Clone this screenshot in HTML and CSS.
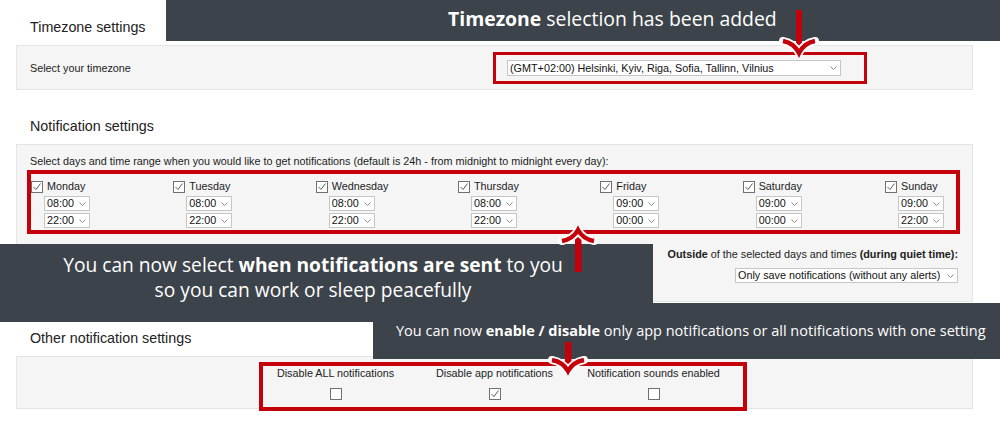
FILE: index.html
```html
<!DOCTYPE html>
<html lang="en">
<head>
<meta charset="utf-8">
<title>Settings</title>
<link rel="stylesheet" href="styles.css">
</head>
<body>
<div class="page">
  <section class="section">
    <h2 class="heading">Timezone settings</h2>
    <div class="panel panel-tz">
      <div class="tz-label">Select your timezone</div>
      <div class="hl hl-tz">
        <div class="select select-tz"><span>(GMT+02:00) Helsinki, Kyiv, Riga, Sofia, Tallinn, Vilnius</span><svg class="chev" viewBox="0 0 7 4"><polyline points="0.5,0.5 3.5,3.5 6.5,0.5"/></svg></div>
      </div>
    </div>
  </section>

  <section class="section">
    <h2 class="heading">Notification settings</h2>
    <div class="panel panel-notif">
      <p class="intro">Select days and time range when you would like to get notifications (default is 24h - from midnight to midnight every day):</p>
      <div class="hl hl-days">
        <div class="day">
          <div class="day-head"><span class="cb"><svg viewBox="0 0 10 10"><polyline points="1.5,5 4,7.5 8.5,1.5"/></svg></span><span>Monday</span></div>
          <div class="select select-time"><span>08:00</span><svg class="chev" viewBox="0 0 7 4"><polyline points="0.5,0.5 3.5,3.5 6.5,0.5"/></svg></div>
          <div class="select select-time"><span>22:00</span><svg class="chev" viewBox="0 0 7 4"><polyline points="0.5,0.5 3.5,3.5 6.5,0.5"/></svg></div>
        </div>
        <div class="day">
          <div class="day-head"><span class="cb"><svg viewBox="0 0 10 10"><polyline points="1.5,5 4,7.5 8.5,1.5"/></svg></span><span>Tuesday</span></div>
          <div class="select select-time"><span>08:00</span><svg class="chev" viewBox="0 0 7 4"><polyline points="0.5,0.5 3.5,3.5 6.5,0.5"/></svg></div>
          <div class="select select-time"><span>22:00</span><svg class="chev" viewBox="0 0 7 4"><polyline points="0.5,0.5 3.5,3.5 6.5,0.5"/></svg></div>
        </div>
        <div class="day">
          <div class="day-head"><span class="cb"><svg viewBox="0 0 10 10"><polyline points="1.5,5 4,7.5 8.5,1.5"/></svg></span><span>Wednesday</span></div>
          <div class="select select-time"><span>08:00</span><svg class="chev" viewBox="0 0 7 4"><polyline points="0.5,0.5 3.5,3.5 6.5,0.5"/></svg></div>
          <div class="select select-time"><span>22:00</span><svg class="chev" viewBox="0 0 7 4"><polyline points="0.5,0.5 3.5,3.5 6.5,0.5"/></svg></div>
        </div>
        <div class="day">
          <div class="day-head"><span class="cb"><svg viewBox="0 0 10 10"><polyline points="1.5,5 4,7.5 8.5,1.5"/></svg></span><span>Thursday</span></div>
          <div class="select select-time"><span>08:00</span><svg class="chev" viewBox="0 0 7 4"><polyline points="0.5,0.5 3.5,3.5 6.5,0.5"/></svg></div>
          <div class="select select-time"><span>22:00</span><svg class="chev" viewBox="0 0 7 4"><polyline points="0.5,0.5 3.5,3.5 6.5,0.5"/></svg></div>
        </div>
        <div class="day">
          <div class="day-head"><span class="cb"><svg viewBox="0 0 10 10"><polyline points="1.5,5 4,7.5 8.5,1.5"/></svg></span><span>Friday</span></div>
          <div class="select select-time"><span>09:00</span><svg class="chev" viewBox="0 0 7 4"><polyline points="0.5,0.5 3.5,3.5 6.5,0.5"/></svg></div>
          <div class="select select-time"><span>00:00</span><svg class="chev" viewBox="0 0 7 4"><polyline points="0.5,0.5 3.5,3.5 6.5,0.5"/></svg></div>
        </div>
        <div class="day">
          <div class="day-head"><span class="cb"><svg viewBox="0 0 10 10"><polyline points="1.5,5 4,7.5 8.5,1.5"/></svg></span><span>Saturday</span></div>
          <div class="select select-time"><span>09:00</span><svg class="chev" viewBox="0 0 7 4"><polyline points="0.5,0.5 3.5,3.5 6.5,0.5"/></svg></div>
          <div class="select select-time"><span>00:00</span><svg class="chev" viewBox="0 0 7 4"><polyline points="0.5,0.5 3.5,3.5 6.5,0.5"/></svg></div>
        </div>
        <div class="day">
          <div class="day-head"><span class="cb"><svg viewBox="0 0 10 10"><polyline points="1.5,5 4,7.5 8.5,1.5"/></svg></span><span>Sunday</span></div>
          <div class="select select-time"><span>09:00</span><svg class="chev" viewBox="0 0 7 4"><polyline points="0.5,0.5 3.5,3.5 6.5,0.5"/></svg></div>
          <div class="select select-time"><span>22:00</span><svg class="chev" viewBox="0 0 7 4"><polyline points="0.5,0.5 3.5,3.5 6.5,0.5"/></svg></div>
        </div>
      </div>
      <div class="quiet">
        <p class="quiet-label"><b>Outside</b> of the selected days and times <b>(during quiet time):</b></p>
        <div class="select select-quiet"><span>Only save notifications (without any alerts)</span><svg class="chev" viewBox="0 0 7 4"><polyline points="0.5,0.5 3.5,3.5 6.5,0.5"/></svg></div>
      </div>
    </div>
  </section>

  <section class="section">
    <h2 class="heading">Other notification settings</h2>
    <div class="panel panel-other">
      <div class="hl hl-other">
        <div class="opts">
          <div class="opt"><span>Disable ALL notifications</span><span class="cb"></span></div>
          <div class="opt"><span>Disable app notifications</span><span class="cb"><svg viewBox="0 0 10 10"><polyline points="1.5,5 4,7.5 8.5,1.5"/></svg></span></div>
          <div class="opt"><span>Notification sounds enabled</span><span class="cb"></span></div>
        </div>
      </div>
    </div>
  </section>

  <div class="banner banner-top"><b>Timezone</b> selection has been added</div>
  <div class="banner banner-mid">You can now select <b>when notifications are sent</b> to you<br>so you can work or sleep peacefully</div>
  <div class="banner banner-bottom">You can now <b>enable / disable</b> only app notifications or all notifications with one setting</div>

  <svg class="arrow arrow-1" viewBox="0 0 36 48"><rect x="15" y="2" width="6" height="38"/><path class="halo" d="M2,33 Q13,35 18,45 Q23,35 34,33"/><path class="head" d="M2,33 Q13,35 18,45 Q23,35 34,33"/></svg>
  <svg class="arrow arrow-2" viewBox="0 0 36 47"><rect x="15" y="8" width="6.5" height="37"/><path class="halo" d="M2,14 Q13,12 18,3 Q23,12 34,14"/><path class="head" d="M2,14 Q13,12 18,3 Q23,12 34,14"/></svg>
  <svg class="arrow arrow-3" viewBox="0 0 36 34"><rect x="15" y="2" width="6.5" height="24"/><path class="halo" d="M2,20 Q13,22 18,31 Q23,22 34,20"/><path class="head" d="M2,20 Q13,22 18,31 Q23,22 34,20"/></svg>
</div>
</body>
</html>
```

FILE: styles.css
```css
* { box-sizing: border-box; }
html, body { margin: 0; padding: 0; background: #fff; }
body { font-family: "Liberation Sans", Arial, sans-serif; color: #1c1c1c; }

.page {
  position: relative;
  width: 1000px;
  height: 425px;
  overflow: hidden;
  padding: 19px 27px 0 16px;
}

.section + .section { margin-top: 28px; }

.heading {
  margin: 0 0 9px 14px;
  font-size: 14.3px;
  line-height: 17px;
  font-weight: normal;
  color: #222;
}

.panel {
  background: #f5f5f5;
  border: 1px solid #e4e4e4;
}

.hl { border: 3px solid #c4000b; }

/* selects */
.select {
  display: flex;
  align-items: center;
  justify-content: space-between;
  background: #fff;
  border: 1px solid #c6c6c6;
  font-size: 10.8px;
  line-height: 13px;
  color: #111;
  padding: 0 3px 0 2px;
  white-space: nowrap;
}
.chev { width: 7px; height: 4px; flex: none; }
.chev polyline { fill: none; stroke: #8a8a8a; stroke-width: 1; }

/* checkboxes */
.cb {
  display: inline-flex;
  align-items: center;
  justify-content: center;
  width: 12px;
  height: 12px;
  flex: none;
  border: 1px solid #707070;
  background: #fff;
}
.cb svg { width: 10px; height: 10px; }
.cb polyline { fill: none; stroke: #5a5a5a; stroke-width: 1; }

/* timezone */
.panel-tz {
  display: flex;
  align-items: center;
  padding: 6px 0 5px 13px;
}
.tz-label { flex: 0 0 463px; font-size: 10.8px; line-height: 13px; }
.hl-tz { padding: 5px 23px 5px 11px; }
.select-tz { width: 334px; height: 16px; }

/* notification */
.panel-notif { padding: 10px 14px 18px 13px; }
.intro { margin: 0 0 2px; font-size: 10.8px; line-height: 13px; white-space: nowrap; }
.hl-days {
  border-width: 4px;
  margin: 0 -2px 0 -3px;
  padding: 6px 0 2px;
  display: grid;
  grid-template-columns: repeat(6, 142.33px) 1fr;
}
.day-head {
  display: flex;
  align-items: center;
  gap: 4px;
  height: 13px;
  font-size: 10.8px;
  line-height: 13px;
}
.select-time { width: 46px; height: 15px; margin: 3px 0 0 13px; }
.select-time + .select-time { margin-top: 2px; }

.quiet {
  margin-top: 14px;
  display: flex;
  flex-direction: column;
  align-items: flex-end;
}
.quiet-label { margin: 0; font-size: 10.8px; line-height: 13px; }
.select-quiet { width: 223px; height: 15px; margin-top: 7px; }

/* other */
.panel-other { padding: 5px 0 0 242px; }
.hl-other {
  border-width: 4px;
  width: 488px;
  margin-bottom: -3px;
  padding: 1px 0 7px;
}
.opts {
  display: grid;
  grid-template-columns: repeat(3, 159px);
  margin-left: -7px;
}
.opt {
  display: flex;
  flex-direction: column;
  align-items: center;
  font-size: 10.8px;
  line-height: 13px;
}
.opt .cb { margin-top: 8px; }

/* annotation banners */
.banner {
  position: absolute;
  background: #3d434b;
  color: #fff;
  font-family: "Open Sans", sans-serif;
  white-space: nowrap;
}
.banner b { font-weight: 700; }
.banner-top {
  left: 166px; top: 0; width: 834px; height: 41px;
  padding-left: 282px;
  font-size: 19.4px; line-height: 38px;
}
.banner-mid {
  left: 0; top: 244px; width: 653px; height: 78px;
  padding: 9px 27px 0 0;
  text-align: center;
  font-size: 19.2px; line-height: 24.6px;
}
.banner-bottom {
  left: 373px; top: 303px; width: 627px; height: 56px;
  padding: 18px 0 0 23px;
  font-size: 14.5px; line-height: 20px;
}

/* arrows */
.arrow { position: absolute; width: 36px; overflow: visible; }
.arrow rect { fill: #c4000b; }
.arrow .halo { fill: none; stroke: #fff; stroke-width: 8; stroke-linecap: round; stroke-linejoin: round; }
.arrow .head { fill: none; stroke: #c4000b; stroke-width: 4.5; stroke-linejoin: miter; }
.arrow-1 { left: 781px; top: 8px; height: 48px; }
.arrow-2 { left: 560px; top: 227px; height: 47px; }
.arrow-3 { left: 550px; top: 340px; height: 34px; }
```
